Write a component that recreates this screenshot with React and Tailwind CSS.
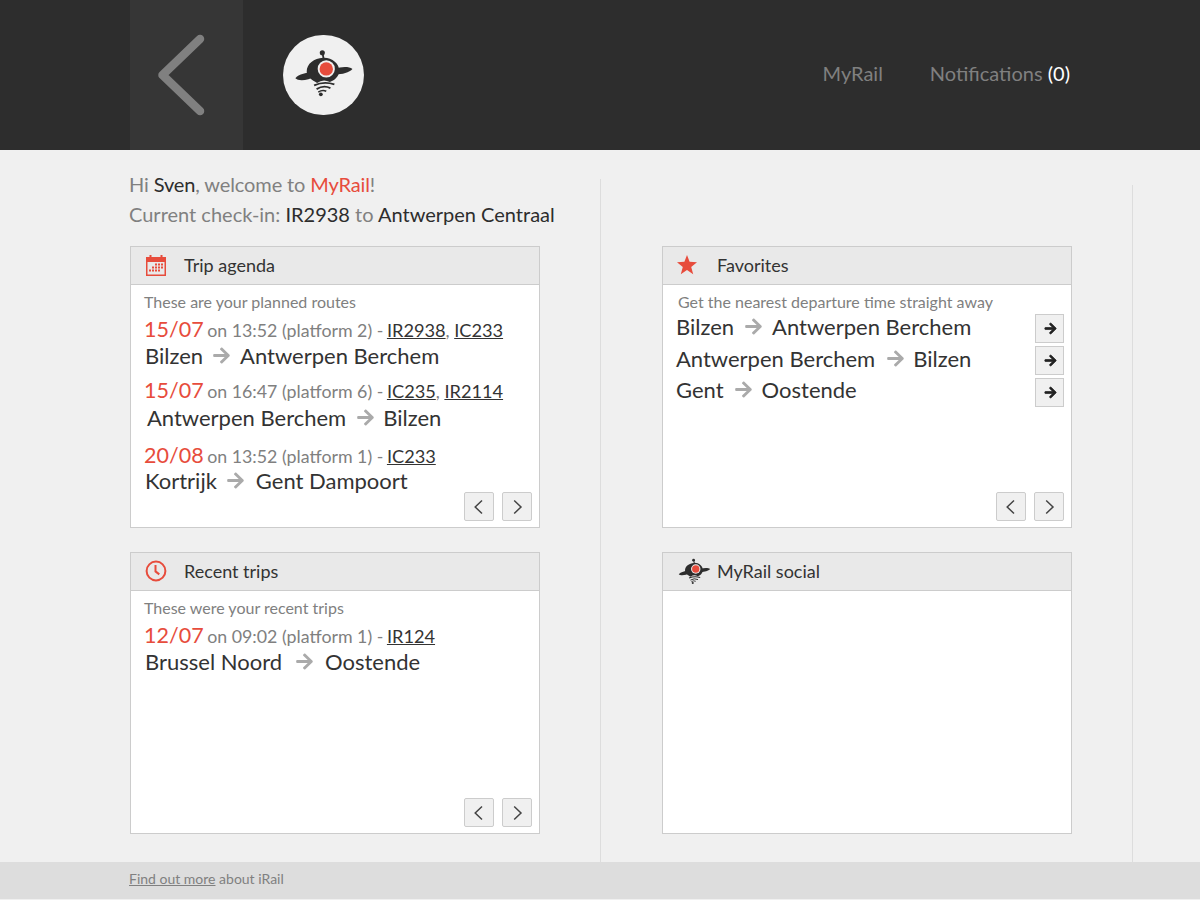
import React from 'react';
import { FaArrowRight } from 'react-icons/fa';

function LogoShape() {
  return (
    <>
      <circle cx="39.3" cy="18" r="2.6" fill="#2d2d2d" />
      <path d="M39.5 18 L40.8 25" stroke="#2d2d2d" strokeWidth="1.8" />
      <path d="M40 23 C49 22.5 56.5 29 56.5 36 C56.5 42 51 46.5 47 47.5 Q40 44 34 48.5 C29 46 23.5 42 23.5 37 C23.5 29 31 23.5 40 23 Z" fill="#2d2d2d" />
      <path d="M12 43.8 C15 39.8 24 37.5 31 37.5 L32 42 C25 46 15 47 12 43.8 Z" fill="#2d2d2d" />
      <path d="M52 34.5 C58 32 66 31.5 69.8 34.5 C67 38 59 40 53 40 Z" fill="#2d2d2d" />
      <circle cx="43.3" cy="34.3" r="8.7" fill="#f0f0f0" />
      <circle cx="43.3" cy="34.3" r="6.8" fill="#e74c3c" />
      <path d="M31 51 Q41 46.5 51.5 50" stroke="#2d2d2d" strokeWidth="2" fill="none" />
      <path d="M33.5 54.8 Q40.5 50.5 47.5 53.8" stroke="#2d2d2d" strokeWidth="1.8" fill="none" />
      <path d="M35.2 57.8 Q39.5 55 43.3 57" stroke="#2d2d2d" strokeWidth="1.6" fill="none" />
      <circle cx="37.8" cy="60" r="1.9" fill="#2d2d2d" />
    </>
  );
}

function CalendarIcon() {
  return (
    <svg width="22" height="22" viewBox="0 0 22 22" className="block">
      <path fillRule="evenodd" fill="#e74c3c" d="M1 3h3.5V1h2v2h9V1h2v2H21v19H1z M2.5 8v12.5h17V8z" />
      <g fill="#e74c3c">
        <rect x="10" y="9.5" width="2" height="2" /><rect x="13" y="9.5" width="2" height="2" /><rect x="16" y="9.5" width="2" height="2" />
        <rect x="7" y="12.5" width="2" height="2" /><rect x="10" y="12.5" width="2" height="2" /><rect x="13" y="12.5" width="2" height="2" /><rect x="16" y="12.5" width="2" height="2" />
        <rect x="4" y="15.5" width="2" height="2" /><rect x="7" y="15.5" width="2" height="2" /><rect x="10" y="15.5" width="2" height="2" /><rect x="13" y="15.5" width="2" height="2" />
      </g>
    </svg>
  );
}

function ClockIcon() {
  return (
    <svg width="22" height="22" viewBox="0 0 22 22" fill="none" stroke="#e74c3c" strokeWidth="2" className="block">
      <circle cx="11" cy="11" r="9.4" />
      <path d="M10.5 5v6.4l3.8 3" />
    </svg>
  );
}

function StarIcon() {
  return (
    <svg width="20" height="20" viewBox="0 0 20 20" className="block">
      <polygon fill="#e74c3c" points="10,0 12.6,6.8 20,7.2 14.2,11.9 16.2,19.2 10,15.1 3.8,19.2 5.8,11.9 0,7.2 7.4,6.8" />
    </svg>
  );
}

function PagerButton({ dir }) {
  return (
    <button className="w-[30px] h-[29px] flex items-center justify-center bg-[#f0f0f0] border border-[#ccc] rounded-[2px]">
      <svg width="12" height="16" viewBox="0 0 12 16" fill="none" stroke="#444" strokeWidth="1.5">
        {dir === 'left' ? <path d="M9 1.5 L2.2 8 L9 14.5" /> : <path d="M3.2 1.5 L10 8 L3.2 14.5" />}
      </svg>
    </button>
  );
}

function Pager() {
  return (
    <div className="mt-auto flex justify-end gap-2 pr-[7px] pb-[6px]">
      <PagerButton dir="left" />
      <PagerButton dir="right" />
    </div>
  );
}

function Panel({ icon, iconBox, title, children }) {
  return (
    <div className="h-[282px] flex flex-col bg-white border border-[#ccc]">
      <div className="h-[38px] shrink-0 flex items-center pb-px bg-[#e9e9e9] border-b border-[#ccc] text-[18px] text-[#333]">
        <div className={iconBox}>{icon}</div>
        <span>{title}</span>
      </div>
      <div className="flex-1 flex flex-col">{children}</div>
    </div>
  );
}

function Route({ from, to, className, arrowClass }) {
  return (
    <div className={`flex items-center h-[26px] text-[22px] text-[#333] ${className}`}>
      <span>{from}</span>
      <FaArrowRight className={`text-[#aaa] text-[19px] ${arrowClass}`} />
      <span>{to}</span>
    </div>
  );
}

function Trip({ date, info, links, className }) {
  return (
    <div className={`flex items-baseline h-[29px] pl-[13px] text-[17.8px] text-[#808080] whitespace-pre ${className}`}>
      <span className="text-[21.5px] text-[#e74c3c]">{date}</span>
      <span className="-mx-px"> on {info} - </span>
      {links.map((l, i) => (
        <span key={l}>
          {i > 0 && ', '}
          <a className="text-[18.2px] text-[#333] underline">{l}</a>
        </span>
      ))}
    </div>
  );
}

export default function App() {
  return (
    <div className="min-h-[900px] flex flex-col bg-[#f0f0f0] font-['Lato',sans-serif]">
      <header className="h-[150px] shrink-0 bg-[#2d2d2d] px-[130px] flex items-center">
        <div className="w-[113px] h-full bg-[#363636] flex items-center justify-center">
          <svg width="113" height="150" viewBox="0 0 113 150" fill="none" stroke="#808080" strokeWidth="8.5" strokeLinecap="round" strokeLinejoin="round">
            <path d="M70 39 L32.5 75 L70 111" />
          </svg>
        </div>
        <div className="ml-10 w-[81px] h-[80px] rounded-full bg-[#f0f0f0]">
          <svg width="81" height="80" viewBox="0 0 81 81" className="block"><LogoShape /></svg>
        </div>
        <nav className="ml-auto mb-[4px] flex gap-[47px] text-[20px] text-[#808080]">
          <a>MyRail</a>
          <a>Notifications <span className="text-white">(0)</span></a>
        </nav>
      </header>

      <main className="flex-1 flex pl-[130px]">
        <section className="w-[471px] mt-[29px] border-r border-[#ddd]">
          <div className="-mt-[10px] -ml-px h-[77px] text-[20px] leading-[30px] text-[#808080]">
            <p className="tracking-[-0.12px]">Hi <span className="text-[#2d2d2d]">Sven</span>, welcome to <span className="text-[#e74c3c]">MyRail</span>!</p>
            <p>Current check-in: <span className="text-[#2d2d2d]">IR2938</span> to <span className="text-[#2d2d2d]">Antwerpen Centraal</span></p>
          </div>
          <div className="w-[410px] flex flex-col gap-6">
            <Panel icon={<CalendarIcon />} iconBox="ml-[14px] mr-[17px]" title="Trip agenda">
              <p className="pl-[13px] pt-[5px] h-[28px] text-[16px] text-[#808080]">These are your planned routes</p>
              <Trip date="15/07" info="13:52 (platform 2)" links={['IR2938', 'IC233']} />
              <Route from="Bilzen" to="Antwerpen Berchem" className="pl-[14px]" arrowClass="ml-[9px] mr-[9px]" />
              <Trip date="15/07" info="16:47 (platform 6)" links={['IC235', 'IR2114']} className="mt-[6px]" />
              <Route from="Antwerpen Berchem" to="Bilzen" className="pl-[16px] mt-[1px]" arrowClass="ml-[10px] mr-2" />
              <Trip date="20/08" info="13:52 (platform 1)" links={['IC233']} className="mt-[9px]" />
              <Route from="Kortrijk" to="Gent Dampoort" className="pl-[14px] -mt-px -mb-px" arrowClass="ml-[9px] mr-[11px]" />
              <Pager />
            </Panel>
            <Panel icon={<ClockIcon />} iconBox="ml-[14px] mr-[17px]" title="Recent trips">
              <p className="pl-[13px] pt-[5px] h-[28px] text-[16px] text-[#808080]">These were your recent trips</p>
              <Trip date="12/07" info="09:02 (platform 1)" links={['IR124']} />
              <Route from="Brussel Noord" to="Oostende" className="pl-[14px]" arrowClass="ml-[13px] mr-[11px]" />
              <Pager />
            </Panel>
          </div>
        </section>

        <section className="w-[532px] mt-[35px] pt-[61px] pl-[61px] border-r border-[#ddd]">
          <div className="w-[410px] flex flex-col gap-6">
            <Panel icon={<StarIcon />} iconBox="ml-[14px] mr-[20px]" title="Favorites">
              <p className="pl-[15px] pt-[5px] h-[28px] text-[16px] text-[#808080]">Get the nearest departure time straight away</p>
              <div className="flex">
                <div className="flex-1 flex flex-col gap-[5px]">
                  <Route from="Bilzen" to="Antwerpen Berchem" className="pl-[13px]" arrowClass="ml-[10px] mr-[9px]" />
                  <Route from="Antwerpen Berchem" to="Bilzen" className="pl-[13px] mt-px" arrowClass="ml-[11px] mr-2" />
                  <Route from="Gent" to="Oostende" className="pl-[13px]" arrowClass="ml-[10px] mr-[9px]" />
                </div>
                <div className="flex flex-col gap-[3px] pr-[7px] pt-px">
                  {[0, 1, 2].map((i) => (
                    <button key={i} className="w-[29px] h-[29px] flex items-center justify-center pl-px bg-[#f0f0f0] border border-[#ccc] text-[#222] text-[13px]">
                      <FaArrowRight stroke="currentColor" strokeWidth="28" />
                    </button>
                  ))}
                </div>
              </div>
              <Pager />
            </Panel>
            <Panel
              icon={<svg width="33" height="26" viewBox="11 14 60 48" className="block"><LogoShape /></svg>}
              iconBox="ml-[15px] mr-[6px]"
              title="MyRail social"
            />
          </div>
        </section>
      </main>

      <footer className="h-[37px] mb-px shrink-0 bg-[#ddd] pl-[129px] pb-[5px] flex items-center text-[14px] text-[#808080]">
        <p><a className="underline">Find out more</a> about iRail</p>
      </footer>
    </div>
  );
}
